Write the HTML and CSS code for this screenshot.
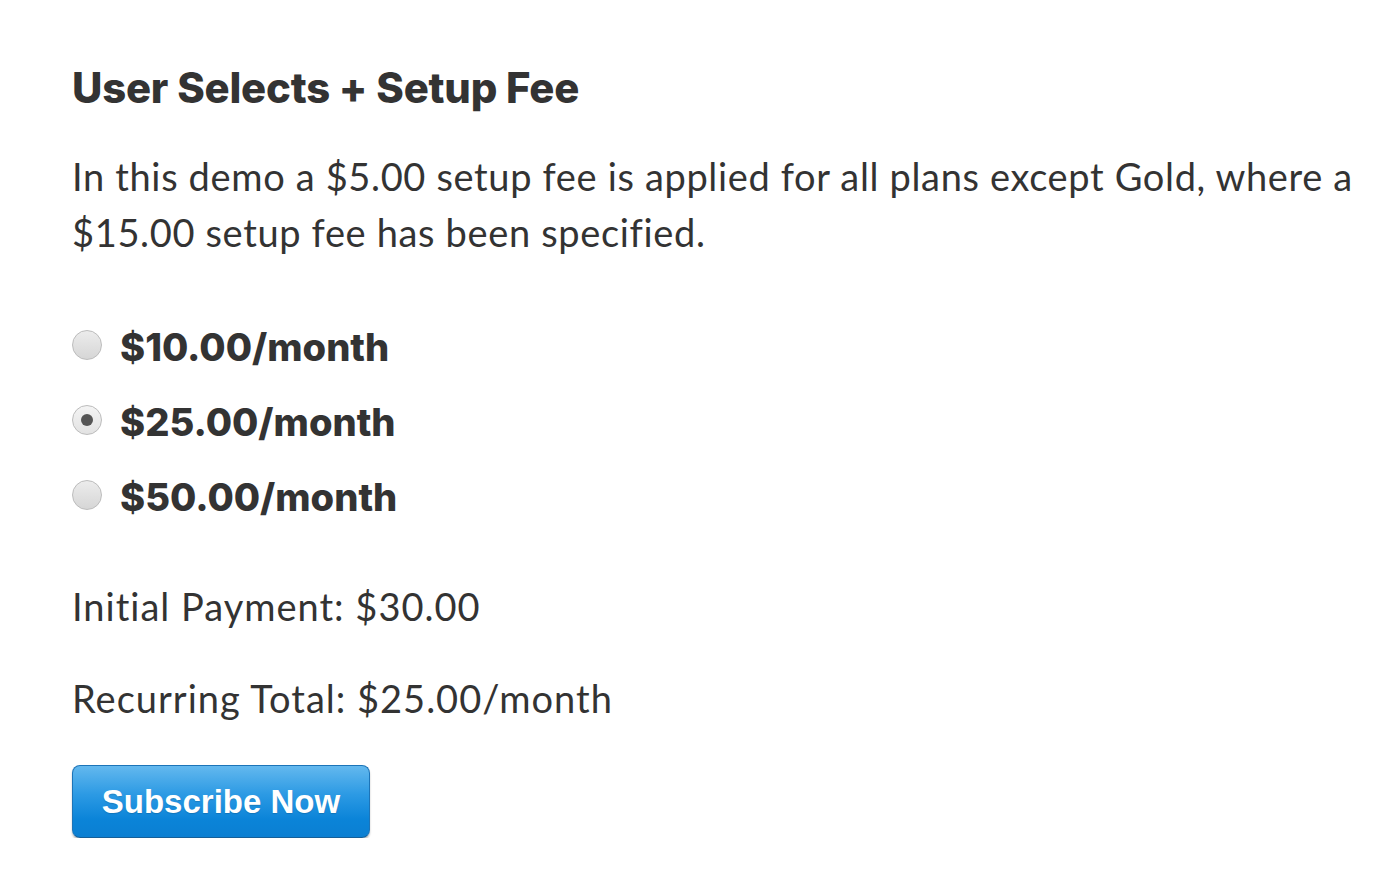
FILE: index.html
```html
<!DOCTYPE html>
<html>
<head>
<meta charset="utf-8">
<link rel="stylesheet" href="styles.css">
</head>
<body>
<main class="page">
  <h2 class="title">User Selects + Setup Fee</h2>
  <p class="intro">In this demo a $5.00 setup fee is applied for all plans except Gold, where a $15.00 setup fee has been specified.</p>
  <div class="plans">
    <label class="plan"><span class="radio"></span><span class="price">$10.00/month</span></label>
    <label class="plan"><span class="radio checked"></span><span class="price">$25.00/month</span></label>
    <label class="plan"><span class="radio"></span><span class="price">$50.00/month</span></label>
  </div>
  <p class="summary">Initial Payment: $30.00</p>
  <p class="summary">Recurring Total: $25.00/month</p>
  <button class="subscribe">Subscribe Now</button>
</main>
</body>
</html>
```
FILE: styles.css
```css
html, body {
  margin: 0;
  padding: 0;
  background: #fff;
}
.page {
  padding: 60px 30px 0 72px;
  color: #333;
  font-family: "Lato", "Liberation Sans", sans-serif;
}
.title {
  margin: 0;
  font-family: "Inter", "Liberation Sans", sans-serif;
  font-weight: 800;
  font-size: 41.8px;
  line-height: 56px;
  color: #333;
  letter-spacing: -0.2px;
}
.intro {
  margin: 32px 0 0;
  font-size: 38px;
  line-height: 56px;
  font-weight: 400;
  letter-spacing: 0.65px;
}
.plans {
  margin-top: 57px;
  display: flex;
  flex-direction: column;
  gap: 19px;
}
.plan {
  display: flex;
  align-items: center;
  gap: 18px;
  height: 56px;
}
.radio {
  width: 30px;
  height: 30px;
  border-radius: 50%;
  border: 1px solid #bcbcbc;
  background: linear-gradient(#ececec, #d6d6d6);
  box-sizing: border-box;
  display: flex;
  align-items: center;
  justify-content: center;
  flex: none;
}
.radio.checked {
  background: linear-gradient(#f4f4f4, #e2e2e2);
}
.radio.checked::after {
  content: "";
  width: 12px;
  height: 12px;
  border-radius: 50%;
  background: #555;
}
.price {
  font-family: "Inter", "Liberation Sans", sans-serif;
  font-weight: 800;
  font-size: 38.1px;
  position: relative;
  top: 2px;
}
.summary {
  margin: 0;
  font-size: 38px;
  line-height: 56px;
  font-weight: 400;
  letter-spacing: 1px;
}
.plans + .summary {
  margin-top: 55px;
}
.summary + .summary {
  margin-top: 36px;
}
.subscribe {
  margin-top: 39px;
  width: 298px;
  height: 73px;
  border: 1px solid #1c74b8;
  border-bottom-color: #155f98;
  border-radius: 8px;
  background: linear-gradient(#63b8ee 0%, #2c9ae4 40%, #0b84d8 75%, #0b7fd2 100%);
  box-shadow: 0 2px 2px rgba(0,0,0,0.25);
  color: #fff;
  font-family: "Liberation Sans", Arial, sans-serif;
  font-weight: 700;
  font-size: 33px;
  text-shadow: 0 1px 1px rgba(0,0,0,0.15);
  padding: 0;
  cursor: pointer;
}
```
